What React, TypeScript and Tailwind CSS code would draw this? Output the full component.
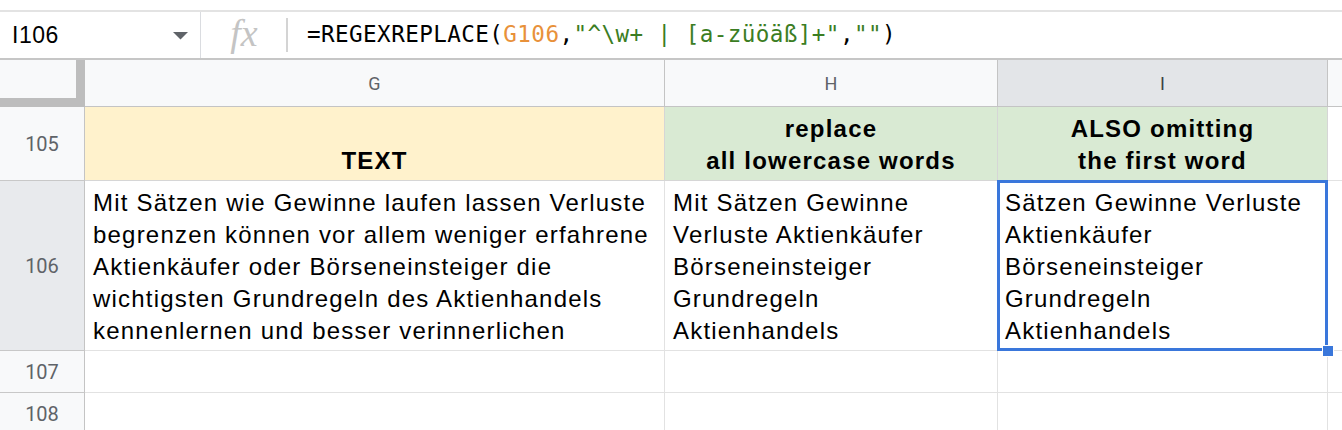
const lines = {
  g: [
    "Mit Sätzen wie Gewinne laufen lassen Verluste",
    "begrenzen können vor allem weniger erfahrene",
    "Aktienkäufer oder Börseneinsteiger die",
    "wichtigsten Grundregeln des Aktienhandels",
    "kennenlernen und besser verinnerlichen",
  ],
  h: ["Mit Sätzen Gewinne", "Verluste Aktienkäufer", "Börseneinsteiger", "Grundregeln", "Aktienhandels"],
  i: ["Sätzen Gewinne Verluste", "Aktienkäufer", "Börseneinsteiger", "Grundregeln", "Aktienhandels"],
};

const cellFont = { fontFamily: "'Liberation Sans', Arial, sans-serif" };

function FormulaBar() {
  return (
    <div className="flex h-[50px] items-stretch border-t-2 border-b-2 border-t-[#e3e3e3] border-b-[#c6c6c6] bg-white">
      <div className="flex w-[200px] items-center justify-between pl-[12px] pr-[12px]">
        <span className="text-[23px] text-black tracking-[0.5px]" style={cellFont}>
          I106
        </span>
        <svg width="15" height="8" viewBox="0 0 15 8" className="mt-[2px]">
          <path d="M0 0 L15 0 L7.5 7.5 Z" fill="#5f6368" />
        </svg>
      </div>
      <div className="w-px bg-[#dadce0]" />
      <div className="flex w-[85px] items-center justify-center">
        <span
          className="text-[38px] italic leading-none text-[#c4c4c4] -mt-[4px] ml-[1px]"
          style={{ fontFamily: "'Liberation Serif', 'Times New Roman', serif" }}
        >
          fx
        </span>
      </div>
      <div className="my-[6px] w-[2px] bg-[#d4d4d4]" />
      <div
        className="flex items-center pl-[19px] text-[22.6px] tracking-[0.42px] text-black whitespace-pre"
        style={{ fontFamily: "'DejaVu Sans Mono', 'Liberation Mono', monospace" }}
      >
        <span>=REGEXREPLACE(</span>
        <span className="text-[#e8913a]">G106</span>
        <span>,</span>
        <span className="text-[#3b7d23]">"^\w+ | [a-züöäß]+"</span>
        <span>,</span>
        <span className="text-[#3b7d23]">""</span>
        <span>)</span>
      </div>
    </div>
  );
}

function ColHead({ label, selected }: { label: string; selected?: boolean }) {
  return (
    <div
      className={
        "flex h-[47px] items-center justify-center border-r border-b border-[#c4c4c4] text-[18px] " +
        (selected ? "bg-[#e3e5e8] text-[#3c4043]" : "bg-[#f8f9fa] text-[#5f6368]")
      }
      style={{ fontFamily: "Roboto, 'Liberation Sans', sans-serif" }}
    >
      {label}
    </div>
  );
}

function RowHead({ n, h, selected }: { n: number; h: string; selected?: boolean }) {
  return (
    <div
      className={
        "flex items-center justify-center border-r border-b border-r-[#c4c4c4] border-b-[#c8c8c8] text-[20px] text-[#5f6368] " +
        h +
        (selected ? " bg-[#e8eaed]" : " bg-[#f8f9fa]")
      }
      style={{ fontFamily: "Roboto, 'Liberation Sans', sans-serif" }}
    >
      {n}
    </div>
  );
}

function TextCell({ rows }: { rows: string[] }) {
  return (
    <div className="flex flex-col justify-end pb-[3px]">
      {rows.map((r) => (
        <div key={r} className="whitespace-nowrap leading-[32px]">
          {r}
        </div>
      ))}
    </div>
  );
}

export default function App() {
  return (
    <div className="h-[430px] w-[1342px] overflow-hidden bg-white">
      <div className="h-[10px]" />
      <FormulaBar />
      <div className="grid grid-cols-[85px_580px_333px_330px_1fr]" style={cellFont}>
        {/* column headers */}
        <div className="h-[47px] border-r-[9px] border-b-[9px] border-[#bdbdbd] bg-[#f8f9fa]" />
        <ColHead label="G" />
        <ColHead label="H" />
        <ColHead label="I" selected />
        <div className="h-[47px] border-b border-[#c4c4c4] bg-[#f8f9fa]" />

        {/* row 105 */}
        <RowHead n={105} h="h-[74px]" />
        <div className="flex items-end justify-center border-r border-b border-[#d6d6d6] bg-[#fff2cc] pb-[3px] text-[24px] tracking-[1.2px] font-bold leading-[32px] text-black">
          TEXT
        </div>
        <div className="flex flex-col items-center justify-end border-r border-b border-[#d6d6d6] bg-[#d9ead3] pb-[3px] text-[24px] tracking-[1.2px] font-bold leading-[32px] text-black">
          <div>replace</div>
          <div>all lowercase words</div>
        </div>
        <div className="flex flex-col items-center justify-end border-r border-b border-[#d6d6d6] bg-[#d9ead3] pb-[3px] text-[24px] tracking-[1.2px] font-bold leading-[32px] text-black">
          <div>ALSO omitting</div>
          <div>the first word</div>
        </div>
        <div className="border-b border-[#e2e2e2]" />

        {/* row 106 */}
        <RowHead n={106} h="h-[170px]" selected />
        <div className="flex items-end border-r border-b border-[#e2e2e2] pl-[8px] text-[24px] tracking-[1.2px] text-black">
          <TextCell rows={lines.g} />
        </div>
        <div className="flex items-end border-r border-b border-[#e2e2e2] pl-[8px] text-[24px] tracking-[1.2px] text-black">
          <TextCell rows={lines.h} />
        </div>
        <div className="relative flex items-end border-r border-b border-[#e2e2e2] pl-[7px] text-[24px] tracking-[1.2px] text-black">
          <TextCell rows={lines.i} />
          <div className="pointer-events-none absolute -top-px -left-px -right-px -bottom-px border-[3px] border-[#3a77db]" />
          <div className="absolute -right-[7px] -bottom-[7px] h-[12px] w-[12px] border border-white bg-[#3a77db]" />
        </div>
        <div className="border-b border-[#e2e2e2]" />

        {/* row 107 */}
        <RowHead n={107} h="h-[42px]" />
        <div className="border-r border-b border-[#e2e2e2]" />
        <div className="border-r border-b border-[#e2e2e2]" />
        <div className="border-r border-b border-[#e2e2e2]" />
        <div className="border-b border-[#e2e2e2]" />

        {/* row 108 */}
        <RowHead n={108} h="h-[42px]" />
        <div className="border-r border-b border-[#e2e2e2]" />
        <div className="border-r border-b border-[#e2e2e2]" />
        <div className="border-r border-b border-[#e2e2e2]" />
        <div className="border-b border-[#e2e2e2]" />
      </div>
    </div>
  );
}
